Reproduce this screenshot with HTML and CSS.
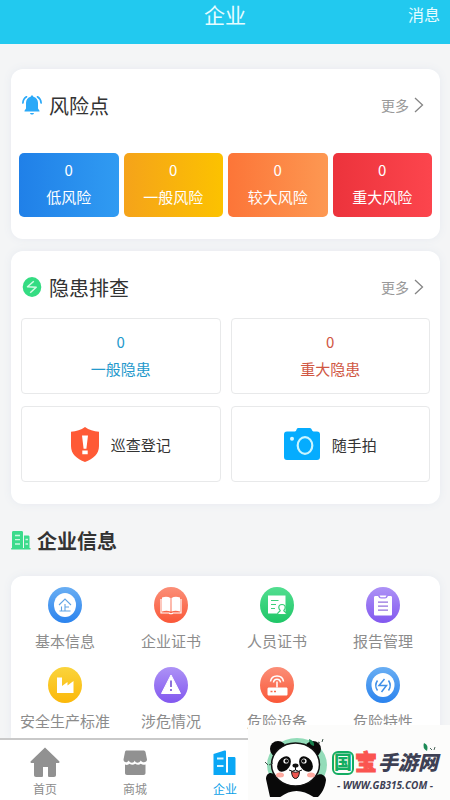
FILE: index.html
```html
<!DOCTYPE html>
<html lang="zh-CN">
<head>
<meta charset="utf-8">
<meta name="viewport" content="width=device-width, initial-scale=1">
<title>企业</title>
<link rel="stylesheet" href="styles.css">
</head>
<body>
<svg class="defs" width="0" height="0" aria-hidden="true">
  <defs>
    <linearGradient id="blue" x1="0" y1="0" x2="0" y2="1"><stop offset="0" stop-color="#69aef3"/><stop offset="1" stop-color="#2b83ee"/></linearGradient>
    <linearGradient id="red" x1="0" y1="0" x2="0" y2="1"><stop offset="0" stop-color="#fb8f78"/><stop offset="1" stop-color="#fa5738"/></linearGradient>
    <linearGradient id="green" x1="0" y1="0" x2="0" y2="1"><stop offset="0" stop-color="#52de90"/><stop offset="1" stop-color="#1fc667"/></linearGradient>
    <linearGradient id="purple" x1="0" y1="0" x2="0" y2="1"><stop offset="0" stop-color="#ad92f6"/><stop offset="1" stop-color="#8258ef"/></linearGradient>
    <linearGradient id="yellow" x1="0" y1="0" x2="0" y2="1"><stop offset="0" stop-color="#fad43c"/><stop offset="1" stop-color="#fbb80a"/></linearGradient>
  </defs>
</svg>
<div class="app">
  <header class="topbar">
    <h1 class="topbar-title">企业</h1>
    <a class="topbar-link" href="#messages">消息</a>
  </header>

  <main class="content">
    <section class="card">
      <div class="card-head">
        <svg class="head-icon" viewBox="0 0 20 20" aria-hidden="true">
          <path d="M10 .5c.8 0 1.300.5 1.300 1.300C14.200 2.400 16 4.800 16 8v5.500l1.500 2.300v.7h-15v-.7L4 13.500V8c0-3.200 1.800-5.600 4.700-6.200C8.700 1 9.200.5 10 .5z" fill="#2ba9f8"/>
          <path d="M8 18h4c-.3 1-1 1.500-2 1.500S8.300 19 8 18z" fill="#2ba9f8"/>
          <path d="M4.500 1.800C2.300 3.200 1 5.300.9 8M15.500 1.800c2.200 1.400 3.500 3.500 3.600 6.200" fill="none" stroke="#2ba9f8" stroke-width="1.700" stroke-linecap="round"/>
        </svg>
        <h2 class="card-title">风险点</h2>
        <a class="more" href="#risks">更多
          <svg class="chevron" viewBox="0 0 10 16" aria-hidden="true"><path d="M1 1l7.500 7L1 15" fill="none" stroke="#858585" stroke-width="1.300"/></svg>
        </a>
      </div>
      <div class="risk-grid">
        <button class="risk risk-low" type="button"><span class="count">0</span><span>低风险</span></button>
        <button class="risk risk-normal" type="button"><span class="count">0</span><span>一般风险</span></button>
        <button class="risk risk-high" type="button"><span class="count">0</span><span>较大风险</span></button>
        <button class="risk risk-major" type="button"><span class="count">0</span><span>重大风险</span></button>
      </div>
    </section>

    <section class="card">
      <div class="card-head">
        <svg class="head-icon" viewBox="0 0 20 20" aria-hidden="true">
          <ellipse cx="10" cy="10" rx="9.300" ry="10" fill="#34dc82"/>
          <path d="M11.800 4.200L5.500 9.700l8.700.6-6 5.500" fill="none" stroke="#d5fbe5" stroke-width="1.500" stroke-linejoin="round"/>
        </svg>
        <h2 class="card-title">隐患排查</h2>
        <a class="more" href="#hazards">更多
          <svg class="chevron" viewBox="0 0 10 16" aria-hidden="true"><path d="M1 1l7.500 7L1 15" fill="none" stroke="#858585" stroke-width="1.300"/></svg>
        </a>
      </div>
      <div class="hazard-grid">
        <button class="box box-count is-blue" type="button"><span class="count">0</span><span>一般隐患</span></button>
        <button class="box box-count is-red" type="button"><span class="count">0</span><span>重大隐患</span></button>
        <button class="box" type="button">
          <svg class="shield" viewBox="0 0 28 35" aria-hidden="true">
            <path d="M14 0c4 3 8.500 4.300 14 4.700V19c0 8-5.500 12.700-14 16C5.500 31.700 0 27 0 19V4.700C5.500 4.300 10 3 14 0z" fill="#ff5a36"/>
            <path d="M11 8.500h6l-1.600 13.300h-2.800zM11.300 23.500h5.400v3.800h-5.400z" fill="#fff"/>
          </svg>
          <span>巡查登记</span>
        </button>
        <button class="box" type="button">
          <svg class="camera" viewBox="0 0 36 32" aria-hidden="true">
            <path d="M14 0h12c1.500 0 2.200 3.500 3.500 3.500H33c2 0 3 1 3 3V29c0 2-1 3-3 3H3c-2 0-3-1-3-3V6.500c0-2 1-3 3-3h8C12.500 3.500 12.500 0 14 0z" fill="#05acfe"/>
            <ellipse cx="21" cy="17.500" rx="7.300" ry="8.300" fill="none" stroke="#c9f5ff" stroke-width="2.200"/>
            <circle cx="8" cy="10.800" r="2" fill="#d9f8ff"/>
          </svg>
          <span>随手拍</span>
        </button>
      </div>
    </section>

    <div class="section-head">
      <svg class="head-icon" viewBox="0 0 20 20" aria-hidden="true">
        <path d="M1 2.500C1 1.500 1.500 1 2.500 1h8c1 0 1.500.5 1.500 1.500V18h1V5.500h4c1 0 1.500.5 1.500 1.500v11h1v1.500H.2V18H1z" fill="#3cdb8c"/>
        <path d="M4 5.500h5M4 9.700h5M4 14h5M14.500 9.500h2.500M14.500 14h2.500" stroke="#c9f8df" stroke-width="1.300"/>
      </svg>
      <h2 class="section-title">企业信息</h2>
    </div>

    <section class="card card-info">
      <a class="info" href="#basic">
        <svg class="info-icon" viewBox="0 0 34 36" aria-hidden="true">
          <ellipse cx="17" cy="18" rx="17" ry="18" fill="url(#blue)"/><ellipse cx="17" cy="18" rx="11" ry="12" fill="#fff"/>
          <path d="M11 18l6-6 6 6M17 17v6.500M13.500 19.500v4M17 20h4M11.500 24h11" fill="none" stroke="#62a5e5" stroke-width="1.100"/>
        </svg>
        <span>基本信息</span>
      </a>
      <a class="info" href="#company-cert">
        <svg class="info-icon" viewBox="0 0 34 36" aria-hidden="true">
          <ellipse cx="17" cy="18" rx="17" ry="18" fill="url(#red)"/>
          <path d="M8 10.500q5-1.500 8.500.5v13.500q-4-1.500-8.500 0zM26 10.500q-5-1.500-8.500.5v13.500q4-1.500 8.500 0z" fill="#fff"/>
          <path d="M7 12v14h8q2 1.500 4 0h8V12" fill="none" stroke="#fff" stroke-width="1.200"/>
        </svg>
        <span>企业证书</span>
      </a>
      <a class="info" href="#staff-cert">
        <svg class="info-icon" viewBox="0 0 34 36" aria-hidden="true">
          <ellipse cx="17" cy="18" rx="17" ry="18" fill="url(#green)"/>
          <path d="M8 8.500h17.500v18H8z" fill="#fff"/>
          <path d="M11 13.500h7.500M11 17.500h5M11 21.500h4" stroke="#3ecf7c" stroke-width="1.200"/>
          <path d="M22 17.500c2 0 3.200 1.200 3.200 3 0 1.200-.6 2.200-1.400 2.900.2 1.600 2.700 1.100 2.700 4.100h-9c0-3 2.500-2.500 2.700-4.100-.8-.7-1.400-1.700-1.400-2.900 0-1.800 1.200-3 3.200-3z" fill="#fff" stroke="#35cd75" stroke-width="1.200"/>
        </svg>
        <span>人员证书</span>
      </a>
      <a class="info" href="#reports">
        <svg class="info-icon" viewBox="0 0 34 36" aria-hidden="true">
          <ellipse cx="17" cy="18" rx="17" ry="18" fill="url(#purple)"/>
          <path d="M9.500 9H12q1 2.500 3 2.500h4q2 0 3-2.500h2.500c1 0 1.500.5 1.500 1.500V27c0 1-.5 1.500-1.500 1.500h-15C8.500 28.500 8 28 8 27V10.500C8 9.500 8.500 9 9.500 9z" fill="#fff"/>
          <path d="M13.500 8.500h7l-1 1.800h-5z" fill="#fff"/>
          <path d="M12 15.200h10M12 19.200h10M12 23.200h10" stroke="#9471dd" stroke-width="1.300"/>
        </svg>
        <span>报告管理</span>
      </a>
      <a class="info" href="#standards">
        <svg class="info-icon" viewBox="0 0 34 36" aria-hidden="true">
          <ellipse cx="17" cy="18" rx="17" ry="18" fill="url(#yellow)"/>
          <path d="M9 10.500h5V19l5.500-4v3.500L25.500 14v12H9z" fill="#fff"/>
        </svg>
        <span>安全生产标准</span>
      </a>
      <a class="info" href="#hazmat">
        <svg class="info-icon" viewBox="0 0 34 36" aria-hidden="true">
          <ellipse cx="17" cy="18" rx="17" ry="18" fill="url(#purple)"/>
          <path d="M17 8l9.500 18.500h-19z" fill="#fff" stroke="#fff" stroke-linejoin="round"/>
          <path d="M17 13.500v6.500M17 22v2" stroke="#8464d8" stroke-width="1.800"/>
        </svg>
        <span>涉危情况</span>
      </a>
      <a class="info" href="#devices">
        <svg class="info-icon" viewBox="0 0 34 36" aria-hidden="true">
          <ellipse cx="17" cy="18" rx="17" ry="18" fill="url(#red)"/>
          <path d="M9 20.500h17c1 0 1.500.5 1.500 1.500v5c0 1-.5 1.500-1.500 1.500H9c-1 0-1.500-.5-1.500-1.500v-5c0-1 .5-1.500 1.500-1.500z" fill="#fff"/>
          <path d="M17 14.500v6M10.500 14.500c1-7.500 12-7.500 13 0M13.500 15.500c.5-4.500 6.500-4.500 7 0" fill="none" stroke="#fff" stroke-width="1.500"/>
          <path d="M10.500 24.500h2M14 24.500h2" stroke="#fa6a4d" stroke-width="1.700"/>
        </svg>
        <span>危险设备</span>
      </a>
      <a class="info" href="#traits">
        <svg class="info-icon" viewBox="0 0 34 36" aria-hidden="true">
          <ellipse cx="17" cy="18" rx="17" ry="18" fill="url(#blue)"/><ellipse cx="17" cy="18" rx="11.500" ry="12" fill="#fff"/>
          <path d="M18.500 12l-5.500 6.500h7.500L15.500 25M11.500 13.500q-3.500 5 0 10M22.500 13.500q3.500 5 0 10" fill="none" stroke="#3f8fe8" stroke-width="1.500"/>
        </svg>
        <span>危险特性</span>
      </a>
    </section>
  </main>

  <nav class="tabbar">
    <a class="tab" href="#home">
      <svg class="tab-icon" viewBox="0 0 30 30" aria-hidden="true"><path d="M15 .5L29 14c1 1 .5 2-1 2h-2v12c0 1.300-.7 2-2 2h-4.500c-1 0-1.500-.5-1.500-1.500V20h-5v8.500c0 1-.5 1.500-1.500 1.500H6c-1.300 0-2-.7-2-2V16H2c-1.500 0-2-1-1-2z" fill="#919191"/></svg>
      <span>首页</span>
    </a>
    <a class="tab" href="#mall">
      <svg class="tab-icon" viewBox="0 0 30 30" aria-hidden="true"><path d="M6.500 3.500h17c1 0 1.500.5 2 1.500l1.500 7.500c0 3-4.500 4-6.300 1-1.500 3-5 3-6 0-1 3-4.500 3-6 0C7 16.500 3.500 15.500 3.500 12.500L5 5c.3-1 .7-1.500 1.500-1.500z" fill="#919191"/><path d="M5 17.500c2 .8 3.500.3 4.500-.8 2 1.500 4 1.500 5.700 0 2 1.500 4 1.500 5.500 0 1.500 1.200 3 1.500 4.800.8V26c0 1.300-.7 2-2 2H7c-1.300 0-2-.7-2-2z" fill="#919191"/></svg>
      <span>商城</span>
    </a>
    <a class="tab is-active" href="#company" aria-current="page">
      <svg class="tab-icon" viewBox="0 0 30 30" aria-hidden="true"><path d="M3.500 7l11-3.500c1-.3 1.500 0 1.500 1V28H3.500zM18 10h6c1 0 1.500.5 1.500 1.500V28H18zM3.500 25.500h22V28h-22z" fill="#0aa7f5"/><path d="M7 11.500h6.500M7 19h6.500" stroke="#d9f5ff" stroke-width="2"/></svg>
      <span>企业</span>
    </a>
  </nav>

  <aside class="brand">
    <svg class="panda" viewBox="0 0 62 60" aria-hidden="true">
      <ellipse cx="32" cy="28" rx="30" ry="27" fill="#93dcb9"/>
      <path d="M5 60L1 42c0-6 5-8 9-4l8 8h26l7-7c4-4 10-1 10 4-1 8-4 13-8 17z" fill="#090909"/>
      <path d="M14 61q17-14 36 0z" fill="#fcfcfb"/>
      <ellipse cx="13" cy="12" rx="8" ry="8" fill="#090909"/><ellipse cx="48" cy="12" rx="8" ry="8" fill="#090909"/>
      <ellipse cx="30.500" cy="27.500" rx="24" ry="21.500" fill="#fff" stroke="#111" stroke-width="1.500"/>
      <ellipse cx="19" cy="27" rx="6" ry="8.500" transform="rotate(35 19 27)" fill="#090909"/>
      <ellipse cx="41" cy="27" rx="6" ry="8.500" transform="rotate(-35 41 27)" fill="#090909"/>
      <circle cx="21" cy="24" r="2.600" fill="#fff"/><circle cx="39" cy="24" r="2.600" fill="#fff"/>
      <circle cx="21.500" cy="24" r="1.800" fill="#111"/><circle cx="38.500" cy="24" r="1.800" fill="#111"/>
      <ellipse cx="30.500" cy="28.500" rx="3" ry="2" fill="#111"/>
      <path d="M30.500 30v3M24 33q3.500 2.500 6.500 0 3 2.500 6.500 0" fill="none" stroke="#111"/>
      <path d="M26.500 34.500q4 1.500 8 0-.5 7-4 7t-4-7z" fill="#ee5550" stroke="#111"/>
      <ellipse cx="15" cy="38" rx="4" ry="2.500" fill="#ffaaa0"/><ellipse cx="46" cy="38" rx="4" ry="2.500" fill="#ffaaa0"/>
      <path d="M44 2q6 2 5 7-5-1-5-7z" fill="#17804e"/>
      <path d="M53 5l2 1M57 5l1-3M0 25l3 3M4 28l4-2" stroke="#3a5146"/>
    </svg>
    <div class="brand-text">
      <strong class="brand-name"><span class="brand-green">国</span><span class="brand-red">宝</span><span>手游网</span></strong>
      <span class="brand-url">- WWW.GB315.COM -</span>
    </div>
    <svg class="brand-leaf" viewBox="0 0 14 10" aria-hidden="true"><path d="M2 1q5 2 3 8Q0 6 2 1z" fill="#1c8a56"/><path d="M8 6l2 2M12 8l1-3" stroke="#4b655a"/></svg>
  </aside>
</div>
</body>
</html>
```

FILE: styles.css
```css
* {
  box-sizing: border-box;
}

body {
  margin: 0;
  background: #f4f5f6;
  color: #333;
  font-family: Roboto, "Noto Sans CJK SC", sans-serif;
  font-size: 15px;
}

h1,
h2 {
  margin: 0;
  font-weight: 400;
}

a {
  color: inherit;
  text-decoration: none;
}

button {
  border: 0;
  padding: 0;
  color: inherit;
  font: inherit;
  cursor: pointer;
}

svg {
  display: block;
  flex: none;
}

.defs {
  position: absolute;
}

.app {
  display: flex;
  flex-direction: column;
  min-height: 100vh;
}

.topbar {
  display: grid;
  grid-template-columns: 1fr auto 1fr;
  align-items: center;
  padding: 1px 10px 13px;
  background: #22c9ef;
  color: #e6fcff;
  line-height: 30px;
}

.topbar-title {
  grid-column: 2;
  font-size: 21px;
}

.topbar-link {
  justify-self: end;
  font-size: 16px;
}

.content {
  display: flex;
  flex: 1;
  flex-direction: column;
  padding: 25px 10px 0 11px;
}

.card {
  margin-bottom: 12px;
  padding: 18px 8px 22px;
  border-radius: 12px;
  background: #fff;
  box-shadow: 0 0 8px #e6eaf0;
}

.card-head,
.section-head {
  display: flex;
  align-items: center;
  height: 36px;
}

.card-head {
  padding: 0 8px 0 3px;
}

.head-icon {
  width: 20px;
  height: 20px;
}

.card-title {
  margin-left: 7px;
  font-size: 20px;
}

.more {
  display: flex;
  align-items: center;
  gap: 5px;
  margin-left: auto;
  color: #999;
  font-size: 14px;
}

.chevron {
  width: 10px;
  height: 16px;
}

.count {
  font-family: "Noto Sans CJK SC", sans-serif;
}

.risk-grid {
  display: grid;
  grid-template-columns: repeat(4, 1fr);
  gap: 5px;
  margin-top: 30px;
}

.risk {
  display: flex;
  flex-direction: column;
  align-items: center;
  padding: 3px 0 5px;
  border-radius: 5px;
  color: #fff;
  line-height: 28px;
}

.risk-low {
  background: linear-gradient(90deg, #2080e8, #309bf2);
}

.risk-normal {
  background: linear-gradient(90deg, #f5a31a, #fcc200);
}

.risk-high {
  background: linear-gradient(90deg, #fc7538, #fd9852);
}

.risk-major {
  background: linear-gradient(90deg, #ec333c, #fc454d);
}

.hazard-grid {
  display: grid;
  grid-template-columns: 1fr 1fr;
  gap: 12px 10px;
  margin: 13px 2px 0;
}

.box {
  display: flex;
  align-items: center;
  justify-content: center;
  gap: 12px;
  height: 76px;
  border: 1px solid #e8e9ea;
  border-radius: 4px;
  background: #fff;
}

.box-count {
  flex-direction: column;
  gap: 0;
  line-height: 28px;
}

.is-blue {
  color: #2499cc;
}

.is-red {
  color: #d05743;
}

.shield {
  width: 28px;
  height: 35px;
}

.camera {
  width: 36px;
  height: 32px;
}

.section-head {
  margin: 6px 0 18px;
}

.section-title {
  margin-left: 6px;
  font-size: 20px;
  font-weight: 700;
}

.card-info {
  display: grid;
  flex: 1;
  grid-template-columns: repeat(4, 1fr);
  align-content: start;
  row-gap: 13px;
  margin-bottom: 0;
  padding: 11px 4px 4px 1px;
  border-radius: 12px 12px 0 0;
}

.info {
  display: flex;
  flex-direction: column;
  align-items: center;
  gap: 7px;
  color: #8c8c8c;
  line-height: 24px;
}

.info-icon {
  width: 34px;
  height: 36px;
}

.tabbar {
  position: sticky;
  bottom: 0;
  display: grid;
  grid-template-columns: repeat(5, 1fr);
  padding-top: 7px;
  border-top: 2px solid #c9c9c9;
  background: #fff;
}

.tab {
  display: flex;
  flex-direction: column;
  align-items: center;
  gap: 3px;
  color: #8c8c8c;
  font-size: 12px;
  line-height: 20px;
}

.tab.is-active {
  color: #0aa0e8;
}

.tab-icon {
  width: 30px;
  height: 30px;
}

.brand {
  position: fixed;
  right: 0;
  bottom: 0;
  display: flex;
  align-items: center;
  width: 202px;
  height: 75px;
  padding: 8px 0 0 17px;
  background: #fcfcfb;
}

.panda {
  width: 62px;
  height: 60px;
}

.brand-text {
  display: flex;
  flex-direction: column;
  align-items: center;
  margin-left: 5px;
  padding-top: 8px;
  color: #3d4054;
  font-style: italic;
  font-weight: 700;
}

.brand-name {
  display: flex;
  align-items: center;
  gap: 1px;
  font-size: 20px;
  line-height: 28px;
}

.brand-green {
  border: 2px solid #14ad62;
  border-radius: 6px;
  color: #14ad62;
  font-size: 18px;
  font-style: normal;
  line-height: 20px;
}

.brand-red {
  color: #fa5450;
  font-size: 22px;
  font-style: normal;
  -webkit-text-stroke: 1px currentColor;
}

.brand-url {
  font-family: "Open Sans", sans-serif;
  font-size: 10px;
  line-height: 16px;
  white-space: nowrap;
}

.brand-leaf {
  position: absolute;
  top: 17px;
  right: 14px;
  width: 14px;
  height: 10px;
}
```
